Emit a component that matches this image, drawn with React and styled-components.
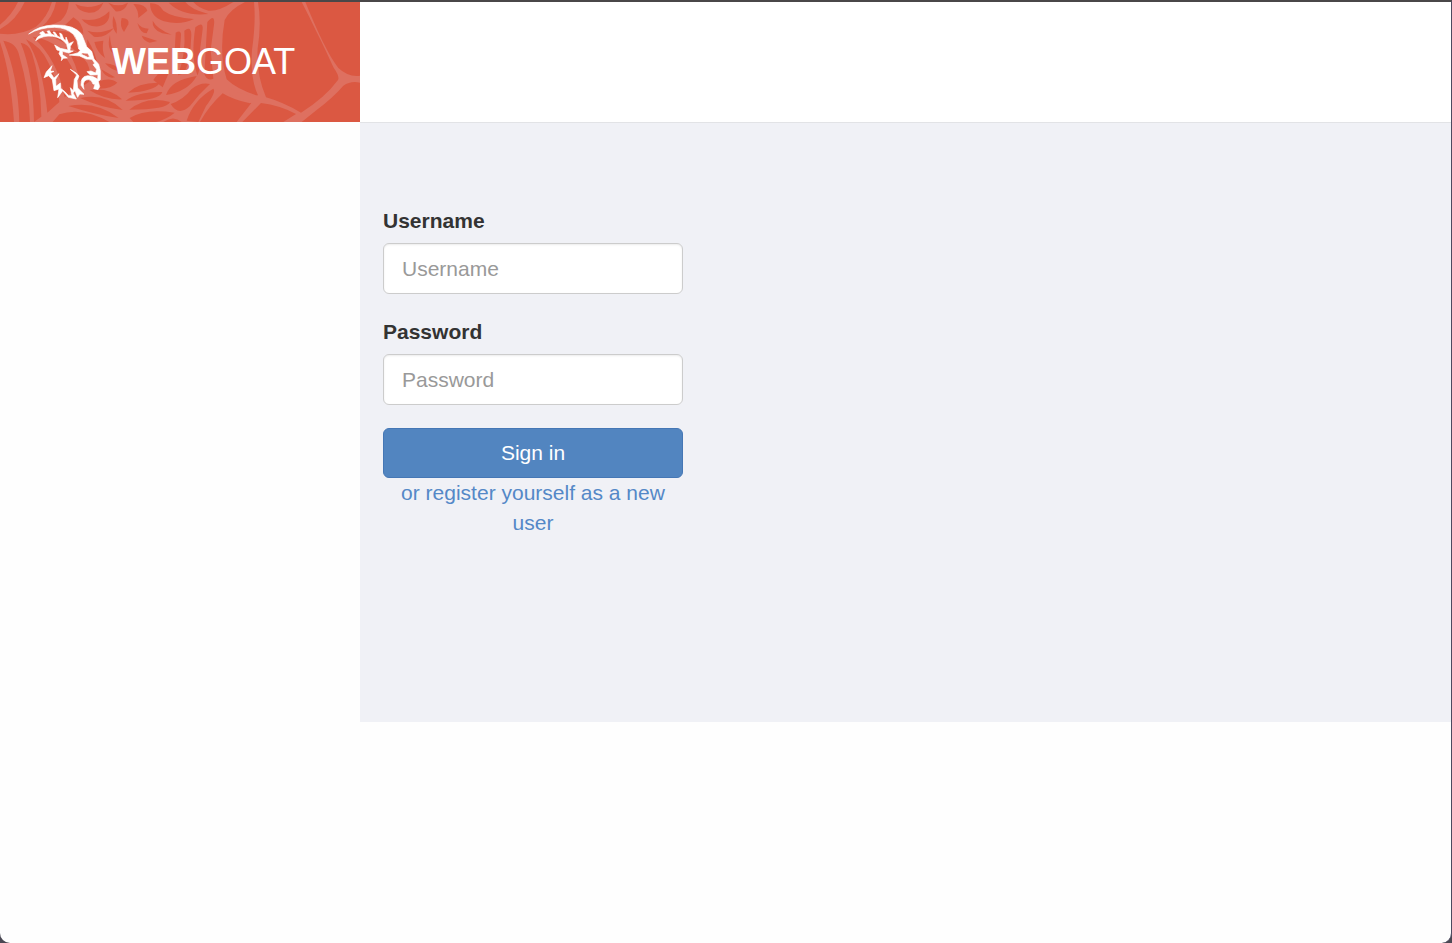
import styled, { createGlobalStyle } from 'styled-components';

const App = () => {
  return (
    <>
      <GlobalStyle />
      <Page>
        <Header>
          <Brand>
            <Web />
            <Goat />
            <BrandName href='#home'>
              <b>WEB</b>GOAT
            </BrandName>
          </Brand>
        </Header>
        <Content>
          <Main>
            <LoginForm onSubmit={(e) => e.preventDefault()}>
              <Field>
                <Label htmlFor='username'>Username</Label>
                <Input id='username' type='text' placeholder='Username' />
              </Field>
              <Field>
                <Label htmlFor='password'>Password</Label>
                <Input id='password' type='password' placeholder='Password' />
              </Field>
              <SignIn type='submit'>Sign in</SignIn>
              <Register href='#registration'>
                or register yourself as a new user
              </Register>
            </LoginForm>
          </Main>
        </Content>
      </Page>
    </>
  );
};

const Web = () => (
  <StWeb viewBox='0 6 1080 360' preserveAspectRatio='none' aria-hidden='true'>
    <path
      d='M0 6 L735 6 Q690 28 674 60 Q656 160 680 238 Q710 268 780 290 L750 310 Q700 300 668 280 Q625 320 600 366 L0 366Z'
      fill='#de7060'
    />
    {/* gaps between the threads, left side */}
    <g fill='#db5842'>
      <path d='M0 6 L54 6 Q36 45 0 74Z' />
      <path d='M74 6 L156 6 Q140 55 108 80 Q60 108 0 101 L0 88 Q50 60 74 6Z' />
      <path d='M168 6 L207 6 Q204 42 182 62 Q150 78 122 84 Q160 52 168 6Z' />
      <path d='M0 126 Q32 220 42 366 L0 366Z' />
      <path d='M10 122 Q50 128 58 168 Q88 270 90 366 L58 366 Q54 225 10 122Z' />
      <path d='M62 128 Q88 132 96 160 Q122 240 124 350 L102 366 Q100 220 62 128Z' />
      <path d='M78 118 Q124 140 146 190 Q174 245 178 306 L142 338 Q128 190 78 118Z' />
      <path d='M98 110 Q170 120 200 176 Q232 222 230 264 L194 292 Q174 180 98 110Z' />
      <path d='M125 98 Q210 80 240 118 Q258 150 250 172 Q196 120 125 98Z' />
      <path d='M196 140 Q244 160 262 190 Q276 222 268 245 L243 262 Q232 190 196 140Z' />
      <path d='M220 52 Q250 70 250 102 Q222 80 195 75Z' />
      <path d='M262 118 Q288 160 292 196 Q270 180 260 154Z' />
      <path d='M178 343 Q246 320 328 366 L158 366Z' />
      <path d='M205 318 Q290 302 356 354 Q285 344 205 318Z' />
      <path d='M240 294 Q316 278 368 330 Q300 322 240 294Z' />
      <path d='M268 270 Q330 262 366 298 Q314 300 268 270Z' />
    </g>
    {/* centre */}
    <g fill='#db5842'>
      <path d='M226 12 Q266 32 310 8 Q298 40 266 38 Q236 36 226 12Z' />
      <path d='M245 58 Q295 68 328 34 Q332 72 296 79 Q264 82 245 58Z' />
      <path d='M262 92 Q302 104 342 84 Q315 116 282 110Z' />
      <path d='M325 8 Q355 24 384 8 Q374 36 347 34Z' />
      <path d='M340 48 Q353 70 350 101 Q332 83 340 48Z' />
      <path d='M365 54 Q390 55 385 73 L372 96 Q358 78 365 54Z' />
      <path d='M400 12 Q435 10 442 32 L415 54 Q416 30 400 12Z' />
      <path d='M450 10 Q476 8 490 32 Q519 53 582 57 Q541 77 492 64 Q451 51 450 10Z' />
      <path d='M506 8 Q548 50 625 42 Q572 28 556 6Z' />
      <path d='M580 6 L700 6 Q655 35 626 32 Q596 25 580 6Z' />
      <path d='M412 69 Q423 86 446 86 L440 100 Q421 100 412 69Z' />
      <path d='M458 62 Q471 87 515 104 L487 100 Q455 88 458 62Z' />
      <path d='M425 107 L472 123 L449 128 Q430 122 425 107Z' />
      <path d='M283 126 L310 122 Q305 150 315 174 Q291 158 283 126Z' />
      <path d='M330 105 Q330 134 345 165 Q318 148 330 105Z' />
      <path d='M315 190 Q348 192 364 214 Q338 215 315 190Z' />
      <path d='M304 208 L345 232 Q318 238 304 208Z' />
      <path d='M295 245 Q330 230 352 248 Q330 270 283 265Z' />
      <path d='M384 278 Q415 246 480 248 Q462 274 384 278Z' />
      <path d='M377 302 Q410 275 487 276 Q480 302 377 302Z' />
      <path d='M388 329 Q440 286 510 306 Q502 329 388 329Z' />
      <path d='M389 354 Q436 324 524 338 Q500 358 468 366 L400 366Z' />
      <path d='M460 240 Q480 208 505 222 L488 262Z' />
    </g>
    {/* right side */}
    <g fill='#db5842'>
      <path d='M527 98 Q543 88 543 105 L540 150 L524 152Z' />
      <path d='M553 92 Q573 76 574 104 Q572 180 552 220 L534 226 Q558 160 553 92Z' />
      <path d='M586 82 Q610 62 608 88 L600 150 Q602 210 592 226 Q572 170 586 82Z' />
      <path d='M622 66 Q646 38 642 74 L632 150 L640 236 Q620 244 613 222Z' />
      <path d='M498 285 Q512 240 590 228 Q565 274 498 285Z' />
      <path d='M512 312 Q550 300 574 268 Q600 246 630 252 Q595 284 570 318 Q535 350 512 312Z' />
      <path d='M560 362 Q580 300 640 266 Q650 275 618 318 L595 366Z' />
      <path d='M490 366 Q520 345 545 366Z' />
    </g>
    {/* loose threads */}
    <path
      d='M905 6 L916 6 C950 90 985 165 1015 204 Q1045 232 1080 227 L1080 248 Q1052 242 1030 257 Q1000 292 951 329 L905 366 L850 366 L888 342 Q840 316 783 309 L727 366 L710 366 L754 309 L690 285 L685 262 Q730 290 774 286 Q750 235 756 150 Q768 65 762 6 L774 6 Q785 70 773 145 Q768 220 798 292 Q848 306 903 338 Q975 293 1014 240 Q1020 230 1001 203 C970 135 935 65 905 6Z'
      fill='#de7060'
    />
  </StWeb>
);

const Goat = () => (
  <StGoat viewBox='84 69 222 228' aria-hidden='true'>
    <g fill='#fff' stroke='#fff' strokeWidth='2' strokeLinejoin='round'>
      <path
        d='M86 99 Q116 74 160 72 Q226 70 246 102 L260 137 L275 151 L282 174 L296 190 L301 209 L301 236 L295 241 L299 257 L294 266 L281 263 L285 250 L279 249 Q273 232 258 237 Q246 243 252 265 L243 253 Q241 226 263 224 Q280 224 293 235 L294 221 L271 222 L261 212 L273 210 L287 216 L290 205 L279 191 L284 187 L276 175 L259 174 L239 165 L208 162 L233 156 L241 148 L236 144 Q234 116 220 100 Q200 80 164 79 Q121 79 86 99Z M248 156 L243 159 L263 169 L269 167 L263 157Z'
        fillRule='evenodd'
      />
      <path d='M107 119 Q111 105 124 102 L119 96 L129 91 L136 99 L146 98 L141 91 L148 89 L154 99 L166 104 L159 93 L165 94 L173 106 L182 110 L179 96 L185 99 L191 114 L197 119 L198 108 L203 120 L206 128 L220 122 L211 136 L210 149 L220 150 L207 156 L187 151 L188 161 L202 171 L190 172 L184 179 L185 170 L177 158 L180 149 L171 147 L164 132 L181 142 L204 147 L200 130 Q184 109 158 106 Q129 102 107 119Z' />
      <path d='M156 194 L151 210 L162 211 L152 216 L162 231 L177 218 L167 235 L168 256 L181 246 L182 262 Q195 271 206 284 L216 284 L211 260 L220 269 L223 235 L231 222 L211 205 L229 216 L237 225 L231 239 L233 261 L252 280 L239 279 L233 289 L225 269 L219 276 L229 294 L205 289 L188 269 L173 290 L177 264 L162 269 L157 236 L146 224 L132 230 L139 213Z' />
    </g>
  </StGoat>
);

export default App;

const GlobalStyle = createGlobalStyle`
  * {
    box-sizing: border-box;
  }

  body {
    margin: 0;
    background: #4a4853;
    color: #333;
    font-family: 'Liberation Sans', Arial, sans-serif;
    font-size: 21px;
    line-height: 30px;
  }
`;

const Page = styled.div`
  min-height: 100vh;
  background: #fefefe;
  border: solid #4a4748;
  border-width: 2px 1px 0 0;
  border-right-color: #4c4a60;
  border-radius: 0 0 10px 10px;
`;

const Header = styled.header`
  display: flex;
  background: #fff;
`;

const Brand = styled.div`
  position: relative;
  display: flex;
  align-items: center;
  gap: 10px;
  width: 360px;
  height: 120px;
  padding-left: 28px;
  background: #db5842;
  overflow: hidden;
`;

const StWeb = styled.svg`
  position: absolute;
  inset: 0;
  width: 100%;
  height: 100%;
`;

const StGoat = styled.svg`
  position: relative;
  width: 74px;
  height: 76px;
`;

const BrandName = styled.a`
  position: relative;
  color: #fff;
  font-size: 36px;
  line-height: 40px;
  text-decoration: none;
`;

const Content = styled.div`
  padding-left: 360px;
`;

const Main = styled.main`
  min-height: 600px;
  padding: 83px 23px 0;
  background: #f0f1f6;
  border-top: 1px solid #e2e3e6;
`;

const LoginForm = styled.form`
  display: flex;
  flex-direction: column;
  max-width: 300px;
`;

const Field = styled.div`
  display: flex;
  flex-direction: column;
  gap: 7px;
  margin-bottom: 23px;
`;

const Label = styled.label`
  font-weight: 700;
`;

const Input = styled.input`
  width: 100%;
  height: 51px;
  padding: 9px 18px;
  border: 1px solid #ccc;
  border-radius: 6px;
  background: #fff;
  box-shadow: inset 0 1px 2px rgba(0, 0, 0, 0.08);
  color: #555;
  font: inherit;

  &::placeholder {
    color: #999;
  }
`;

const SignIn = styled.button`
  height: 50px;
  border: 1px solid #4577b5;
  border-radius: 6px;
  background: #5285c0;
  color: #fff;
  font: inherit;
  cursor: pointer;
`;

const Register = styled.a`
  color: #5488c7;
  text-align: center;
  text-decoration: none;
`;
